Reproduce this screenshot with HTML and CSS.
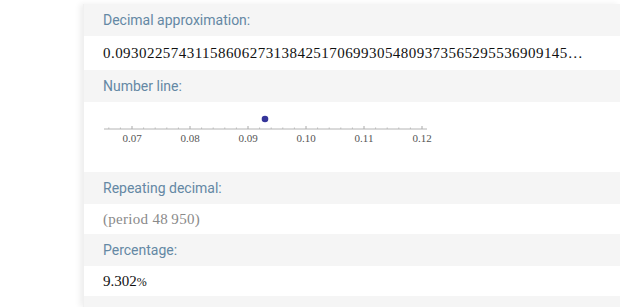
FILE: index.html
```html
<!DOCTYPE html>
<html lang="en">

<head>
    <meta charset="UTF-8">
    <title>Result pods</title>
    <link rel="stylesheet" href="styles.css">
</head>

<body>
    <div class="side"></div>

    <div class="panel">
        <!-- Decimal approximation -->
        <div class="pod-title">Decimal approximation:</div>
        <div class="pod-value digits">0.093022574311586062731384251706993054809373565295536909145…</div>

        <!-- Number line -->
        <div class="pod-title">Number line:</div>
        <div class="pod-plot">
            <svg width="340" height="70" viewBox="0 0 340 70">
                <line x1="1" y1="27" x2="324" y2="27" stroke="#b4b4b4" stroke-width="1" />
                <path d="M5.8 27v-1.5M17.4 27v-1.5M40.6 27v-1.5M52.2 27v-1.5M63.8 27v-1.5M75.4 27v-1.5M98.6 27v-1.5M110.2 27v-1.5M121.8 27v-1.5M133.4 27v-1.5M156.6 27v-1.5M168.2 27v-1.5M179.8 27v-1.5M191.4 27v-1.5M214.6 27v-1.5M226.2 27v-1.5M237.8 27v-1.5M249.4 27v-1.5M272.6 27v-1.5M284.2 27v-1.5M295.8 27v-1.5M307.4 27v-1.5"
                    stroke="#bbb" stroke-width="1" />
                <path d="M29 27v-3M87 27v-3M145 27v-3M203 27v-3M261 27v-3M319 27v-3" stroke="#aaa" stroke-width="1" />
                <g class="tick-label" text-anchor="middle">
                    <text x="29" y="40">0.07</text>
                    <text x="87" y="40">0.08</text>
                    <text x="145" y="40">0.09</text>
                    <text x="203" y="40">0.10</text>
                    <text x="261" y="40">0.11</text>
                    <text x="319" y="40">0.12</text>
                </g>
                <circle cx="162" cy="17" r="3.3" fill="#35359a" />
            </svg>
        </div>

        <!-- Repeating decimal -->
        <div class="pod-title">Repeating decimal:</div>
        <div class="pod-value muted">(period 48&#8201;950)</div>

        <!-- Percentage -->
        <div class="pod-title">Percentage:</div>
        <div class="pod-value short">9.302<span class="pct">%</span></div>

        <div class="pod-title last"></div>
    </div>
</body>

</html>
```

FILE: styles.css
```css
/* General Styles */
body {
    margin: 0;
    background: #ffffff;
    display: flex;
    height: 100vh;
    overflow: hidden;
}

.side {
    width: 83px;
    flex-shrink: 0;
}

/* Result panel */
.panel {
    flex: 1;
    margin-top: 4px;
    background: #ffffff;
    box-shadow: -3px 0 6px rgba(0, 0, 0, 0.07);
    border-left: 1px solid #f0f0f0;
}

.pod-title {
    height: 32px;
    line-height: 32px;
    padding-left: 19px;
    background: #f5f5f5;
    font-family: Roboto, "Liberation Sans", sans-serif;
    font-size: 14px;
    color: #6488a4;
}

.pod-title.last {
    height: 11px;
}

.pod-value {
    height: 34px;
    line-height: 34px;
    padding-left: 19px;
    font-family: "Liberation Serif", serif;
    font-size: 15px;
    color: #111111;
    white-space: nowrap;
}

.pod-value.short {
    height: 30px;
    line-height: 30px;
}

.digits {
    letter-spacing: 0.45px;
}

.muted {
    height: 30px;
    line-height: 30px;
    color: #8a8a8a;
    letter-spacing: 0.3px;
}

.pct {
    font-size: 12px;
}

.pod-plot {
    height: 70px;
    padding-left: 19px;
}

.pod-plot svg {
    display: block;
}

.tick-label {
    font-family: "Liberation Serif", serif;
    font-size: 11px;
    fill: #555555;
}
```
